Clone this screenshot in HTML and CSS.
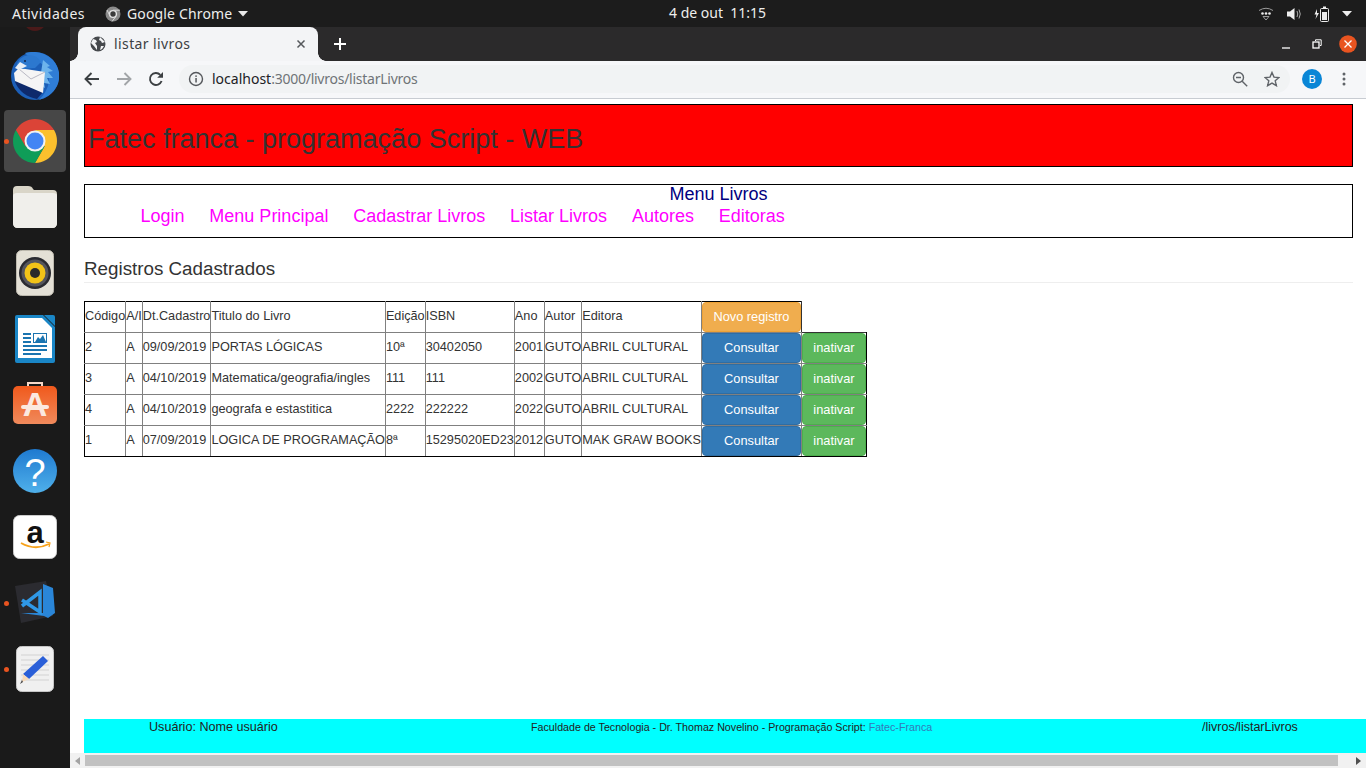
FILE: index.html
```html
<!DOCTYPE html>
<html lang="pt-BR">
<head>
<meta charset="utf-8">
<title>listar livros</title>
<link rel="stylesheet" href="styles.css">
</head>
<body>
<div class="topbar">
  <div class="top-left">
    <span class="top-activities">Atividades</span>
    <span class="top-app">
      <svg class="top-chrome" width="16" height="16" viewBox="0 0 16 16"><circle cx="8" cy="8" r="7.500" fill="#8a8a8a"/><circle cx="8" cy="8" r="3.400" fill="#3a3a3a" stroke="#e6e6e6" stroke-width="1.400"/><path d="M8 4.200H15M5 10l-3-6M10.500 11L7 15.500" stroke="#d8d8d8" stroke-width="1" fill="none"/></svg>
      Google Chrome
      <svg width="10" height="6" viewBox="0 0 10 6"><path d="M0 0h10L5 5.500z" fill="#e8e8e8"/></svg>
    </span>
  </div>
  <span class="top-clock">4 de out&nbsp;&nbsp;11:15</span>
  <div class="top-right">
    <svg width="16" height="14" viewBox="0 0 16 14"><path d="M1 3.500Q8-1 15 3.500" stroke="#9a9a9a" fill="none"/><path d="M5 9.500h6L8 13z" stroke="#9a9a9a" fill="none"/><circle cx="4.500" cy="6.500" r="1.300" fill="#eee"/><circle cx="8" cy="6.500" r="1.300" fill="#eee"/><circle cx="11.500" cy="6.500" r="1.300" fill="#eee"/></svg>
    <svg width="16" height="14" viewBox="0 0 16 14"><path d="M1 4.500h3L8.500 1v12L4 9.500H1z" fill="#eee"/><path d="M11 4q1.500 3 0 6M13 2.500q2.500 4.500 0 9" stroke="#aaa" fill="none"/></svg>
    <svg width="16" height="16" viewBox="0 0 16 16"><path d="M3 3L0.500 8.500H2.500L1.500 13L5 7H3z" fill="#eee"/><rect x="6.500" y="2.500" width="8" height="13" rx="1" fill="none" stroke="#eee"/><rect x="9" y="0.500" width="3" height="2" fill="#eee"/><rect x="8" y="6" width="5" height="8" fill="#eee"/></svg>
    <svg width="10" height="6" viewBox="0 0 10 6"><path d="M0 0h10L5 5.500z" fill="#eee"/></svg>
  </div>
</div>
<div class="desktop">
  <aside class="dock">
    <div class="dock-stub"></div>
    <div class="dock-item dock-bird">
      <svg width="48" height="48" viewBox="0 0 48 48"><circle cx="24" cy="24" r="24" fill="#1c5fb8"/><path d="M14 1Q30-3 42 8Q52 20 46 34Q41 44 28 48Q36 40 38 30Q38 14 26 9Q18 6 14 1z" fill="#2f7dd6"/><path d="M32 8l7 6-3 1 6 4-5 1 5 6-6 0 3 6-6-1 1 5-6-3" fill="#6db4ec"/><path d="M4 30Q10 44 26 47L32 40L6 26z" fill="#0e2a6c"/><path d="M3 21L8 16L34 20L32 41L4 29z" fill="#f5f5f5"/><path d="M8 17L20 27L34 20" stroke="#b9b9c4" fill="none"/><path d="M5 16Q7 4 18 3Q26 3 30 10L24 16L8 17z" fill="#2c78cf"/><path d="M4 16L9 10L16 14L8 18z" fill="#e8eef6"/><circle cx="14" cy="9" r="1" fill="#10244a"/></svg>
    </div>
    <div class="dock-item dock-active">
      <span class="dock-dot"></span>
      <svg width="44" height="44" viewBox="0 0 44 44"><path d="M41.050 11A22 22 0 0 1 22 44L31.500 27.500L22 11z" fill="#fbc02d"/><path d="M2.950 11A22 22 0 0 0 22 44L31.500 27.500L22 22z" fill="#0f9d58"/><path d="M22 11H41.050A22 22 0 0 0 2.950 11L12.500 27.500L22 22z" fill="#db4437"/><circle cx="22" cy="22" r="10.500" fill="#f2f2f2"/><circle cx="22" cy="22" r="8.500" fill="#4285f4"/></svg>
    </div>
    <div class="dock-item">
      <svg width="46" height="44" viewBox="0 0 46 44"><path d="M1 5Q1 1 5 1H16Q20 1 21 4L22 5H41Q45 5 45 9V38Q45 43 40 43H6Q1 43 1 38z" fill="#d9d5c8"/><path d="M1 11Q1 8 5 8H41Q45 8 45 11V38Q45 43 40 43H6Q1 43 1 38z" fill="#f0efeb"/></svg>
    </div>
    <div class="dock-item">
      <svg width="38" height="46" viewBox="0 0 38 46"><rect x="0.500" y="0.500" width="37" height="45" rx="5" fill="#e4e0d6" stroke="#bdb9ae"/><circle cx="19" cy="23" r="16" fill="#2a2a30"/><circle cx="19" cy="23" r="13.500" fill="#55555c"/><circle cx="19" cy="23" r="10.500" fill="#f2c318"/><circle cx="19" cy="23" r="5" fill="#2a2a2a"/></svg>
    </div>
    <div class="dock-item">
      <svg width="40" height="48" viewBox="0 0 40 48"><path d="M0 2Q0 0 2 0H28L40 12V46Q40 48 38 48H2Q0 48 0 46z" fill="#1a86c6"/><path d="M3 3H27L37 13V43H3z" fill="#fff"/><path d="M29 0H38Q40 0 40 2V11z" fill="#1a86c6"/><rect x="8" y="18" width="8" height="2" fill="#1a74b0"/><rect x="8" y="22" width="8" height="2" fill="#1a74b0"/><rect x="8" y="26" width="8" height="2" fill="#1a74b0"/><rect x="18.500" y="18.500" width="13" height="9" fill="#fff" stroke="#1a74b0"/><path d="M20 27l3-5 2 2 3-4 3 7z" fill="#1a74b0"/><rect x="8" y="30" width="24" height="2" fill="#1a74b0"/><rect x="8" y="34" width="24" height="2" fill="#1a74b0"/><rect x="8" y="38" width="18" height="2" fill="#1a74b0"/></svg>
    </div>
    <div class="dock-item">
      <svg width="44" height="46" viewBox="0 0 44 46"><defs><linearGradient id="store" x1="0" y1="0" x2="0" y2="1"><stop offset="0" stop-color="#f0591c"/><stop offset="1" stop-color="#f08a5c"/></linearGradient></defs><path d="M15 5V1H29V5" stroke="#f6d8c8" stroke-width="2" fill="none"/><rect x="0" y="4" width="44" height="38" rx="5" fill="url(#store)"/><text class="store-a" x="22" y="34" text-anchor="middle">A</text><rect x="8" y="23" width="28" height="4" rx="2" fill="#fbe9e0"/></svg>
    </div>
    <div class="dock-item">
      <svg width="44" height="44" viewBox="0 0 44 44"><defs><linearGradient id="help" x1="0" y1="0" x2="0" y2="1"><stop offset="0" stop-color="#1f7ad0"/><stop offset="1" stop-color="#4fb0ea"/></linearGradient></defs><circle cx="22" cy="22" r="22" fill="url(#help)"/><text class="help-q" x="22" y="37" text-anchor="middle">?</text></svg>
    </div>
    <div class="dock-item">
      <svg width="44" height="44" viewBox="0 0 44 44"><rect x="0.500" y="0.500" width="43" height="43" rx="6" fill="#fff" stroke="#ccc"/><text class="amazon-a" x="22" y="28" text-anchor="middle">a</text><path d="M8 28Q22 36 36 29" stroke="#f7a21b" stroke-width="1.800" fill="none"/><path d="M33 27l4 1-1 4" stroke="#f7a21b" stroke-width="1.200" fill="none"/></svg>
    </div>
    <div class="dock-item">
      <span class="dock-dot"></span>
      <svg width="42" height="44" viewBox="0 0 42 44"><path d="M1 5L32 0L39 35L7 42z" fill="#2b2b30"/><path d="M29 3L39 7L41 32L34 37L30 35L7 32L29 32z" fill="#2a86d8"/><path d="M8 25L26 11V31L8 19" fill="none" stroke="#2f98e6" stroke-width="3.500"/></svg>
    </div>
    <div class="dock-item">
      <span class="dock-dot"></span>
      <svg width="38" height="46" viewBox="0 0 38 46"><rect x="0.500" y="0.500" width="37" height="45" rx="5" fill="#f0f0f0" stroke="#c6c6c6"/><path d="M5 9H33M5 14H33M5 19H33M5 24H33M5 29H33M5 34H33" stroke="#d2d2d2"/><path d="M27 10l5 5L13 33l-6-5z" fill="#2a5fd8"/><path d="M7 28l6 5-7 3z" fill="#f7d9b8"/><path d="M6 34l1 2-3 2z" fill="#444"/></svg>
    </div>
    <div class="dock-item dock-grid">
      <i></i><i></i><i></i><i></i><i></i><i></i><i></i><i></i><i></i>
    </div>
  </aside>
  <div class="window">
    <div class="tabstrip">
      <div class="tab">
        <svg width="16" height="16" viewBox="0 0 16 16"><circle cx="8" cy="8" r="7.500" fill="#45484c"/><path d="M3 3l3 1 1 2-2 1 2 3v4L4 10 1 7zM10 1l-1 3 2 1 1 2 3-1zM11 10h3l-2 3-2 1z" fill="#f3f4f6"/></svg>
        <span class="tab-title">listar livros</span>
        <svg class="tab-close" width="10" height="10" viewBox="0 0 10 10"><path d="M1.500 1.500l7 7M8.500 1.500l-7 7" stroke="#55585c" stroke-width="1.500"/></svg>
      </div>
      <svg class="tab-new" width="12" height="12" viewBox="0 0 12 12"><path d="M6 0v12M0 6h12" stroke="#fff" stroke-width="2"/></svg>
      <div class="win-controls">
        <svg width="10" height="10" viewBox="0 0 10 10"><path d="M1 9h8" stroke="#fff" stroke-width="1.300"/></svg>
        <svg width="10" height="10" viewBox="0 0 10 10"><path d="M3.500 2V0.800H9.200V6.500H8" stroke="#fff" fill="none"/><rect x="1" y="3" width="6" height="6" fill="none" stroke="#fff" stroke-width="1.300"/></svg>
        <svg width="18" height="18" viewBox="0 0 18 18"><circle cx="9" cy="9" r="8.800" fill="#e95420"/><path d="M5.500 5.500l7 7M12.500 5.500l-7 7" stroke="#fff" stroke-width="1.300"/></svg>
      </div>
    </div>
    <div class="toolbar">
      <span class="tool"><svg width="16" height="14" viewBox="0 0 16 14"><path d="M15 7H2M7.500 1L1.500 7l6 6" stroke="#3c4043" stroke-width="1.900" fill="none"/></svg></span>
      <span class="tool"><svg width="16" height="14" viewBox="0 0 16 14"><path d="M1 7H14M8.500 1l6 6-6 6" stroke="#a2a5a8" stroke-width="1.900" fill="none"/></svg></span>
      <span class="tool"><svg width="16" height="16" viewBox="0 0 16 16"><path d="M13.600 10A6 6 0 1 1 12.300 3.800" stroke="#3c4043" stroke-width="1.900" fill="none"/><path d="M15 1V6.800H9.200z" fill="#3c4043"/></svg></span>
      <div class="omnibox">
        <svg width="16" height="16" viewBox="0 0 16 16"><circle cx="8" cy="8" r="6.500" stroke="#55585c" stroke-width="1.400" fill="none"/><rect x="7.300" y="7" width="1.500" height="4.500" fill="#55585c"/><rect x="7.300" y="4.400" width="1.500" height="1.500" fill="#55585c"/></svg>
        <span class="url"><span class="url-host">localhost</span>:3000/livros/listarLivros</span>
        <span class="tool omni-first"><svg width="16" height="16" viewBox="0 0 16 16"><circle cx="6.500" cy="6.500" r="5" stroke="#5f6368" stroke-width="1.400" fill="none"/><path d="M4 6.500h5M10.200 10.200l5 5" stroke="#5f6368" stroke-width="1.400"/></svg></span>
        <span class="tool"><svg width="16" height="16" viewBox="0 0 16 16"><path d="M8 1.500l2 4.600 5 .4-3.800 3.300 1.200 4.900L8 12.100l-4.400 2.600 1.200-4.900L1 6.500l5-.4z" stroke="#5f6368" stroke-width="1.400" fill="none"/></svg></span>
      </div>
      <span class="tool tool-avatar"><span class="avatar">B</span></span>
      <span class="tool"><svg width="4" height="14" viewBox="0 0 4 14"><circle cx="2" cy="2" r="1.500" fill="#5f6368"/><circle cx="2" cy="7" r="1.500" fill="#5f6368"/><circle cx="2" cy="12" r="1.500" fill="#5f6368"/></svg></span>
    </div>
    <div class="viewport">
      <main class="content">
        <header class="banner">Fatec franca - programação Script - WEB</header>
        <nav class="menu">
          <div class="menu-title">Menu Livros</div>
          <div class="menu-links">
            <a href="#">Login</a>
            <a href="#">Menu Principal</a>
            <a href="#">Cadastrar Livros</a>
            <a href="#">Listar Livros</a>
            <a href="#">Autores</a>
            <a href="#">Editoras</a>
          </div>
        </nav>
        <h1 class="section-title">Registros Cadastrados</h1>
        <table class="grid">
          <thead>
            <tr>
              <td>Código</td><td>A/I</td><td>Dt.Cadastro</td><td>Titulo do Livro</td><td>Edição</td><td>ISBN</td><td class="col-ano">Ano</td><td>Autor</td><td>Editora</td>
              <td class="cell-btn cell-head-end"><button class="btn btn-orange">Novo registro</button></td>
            </tr>
          </thead>
          <tbody>
            <tr>
              <td>2</td><td>A</td><td>09/09/2019</td><td>PORTAS LÓGICAS</td><td>10ª</td><td>30402050</td><td>2001</td><td>GUTO</td><td>ABRIL CULTURAL</td>
              <td class="cell-btn"><button class="btn btn-blue">Consultar</button></td>
              <td class="cell-btn"><button class="btn btn-green">inativar</button></td>
            </tr>
            <tr>
              <td>3</td><td>A</td><td>04/10/2019</td><td>Matematica/geografia/ingles</td><td>111</td><td>111</td><td>2002</td><td>GUTO</td><td>ABRIL CULTURAL</td>
              <td class="cell-btn"><button class="btn btn-blue">Consultar</button></td>
              <td class="cell-btn"><button class="btn btn-green">inativar</button></td>
            </tr>
            <tr>
              <td>4</td><td>A</td><td>04/10/2019</td><td>geografa e estastitica</td><td>2222</td><td>222222</td><td>2022</td><td>GUTO</td><td>ABRIL CULTURAL</td>
              <td class="cell-btn"><button class="btn btn-blue">Consultar</button></td>
              <td class="cell-btn"><button class="btn btn-green">inativar</button></td>
            </tr>
            <tr>
              <td>1</td><td>A</td><td>07/09/2019</td><td>LOGICA DE PROGRAMAÇÃO</td><td>8ª</td><td>15295020ED23</td><td>2012</td><td>GUTO</td><td>MAK GRAW BOOKS</td>
              <td class="cell-btn"><button class="btn btn-blue">Consultar</button></td>
              <td class="cell-btn"><button class="btn btn-green">inativar</button></td>
            </tr>
          </tbody>
        </table>
      </main>
      <footer class="footer">
        <span class="foot-user">Usuário: Nome usuário</span>
        <span class="foot-credit">Faculdade de Tecnologia - Dr. Thomaz Novelino - Programação Script: <a href="#">Fatec-Franca</a></span>
        <span class="foot-path">/livros/listarLivros</span>
      </footer>
      <div class="hscroll">
        <svg class="hscroll-arrow" width="5" height="8" viewBox="0 0 5 8"><path d="M5 0v8L0 4z" fill="#a3a3a3"/></svg>
        <div class="hscroll-thumb"></div>
        <svg class="hscroll-arrow" width="5" height="8" viewBox="0 0 5 8"><path d="M0 0v8l5-4z" fill="#505050"/></svg>
      </div>
    </div>
  </div>
</div>
</body>
</html>
```
FILE: styles.css
```css
* { box-sizing: border-box; }
html, body { margin: 0; height: 100%; overflow: hidden; }
body {
  width: 1366px;
  height: 768px;
  display: flex;
  flex-direction: column;
  font-family: "Liberation Sans", Arial, sans-serif;
  color: #333;
  background: #1c1c1c;
}

/* GNOME top bar */
.topbar {
  flex: 0 0 27px;
  position: relative;
  display: flex;
  align-items: center;
  justify-content: space-between;
  background: #1c1c1c;
  color: #eeeeec;
  font-family: "Noto Sans", sans-serif;
  font-size: 14px;
  padding: 0 14px 0 12px;
}
.top-left { display: flex; align-items: center; gap: 20px; }
.top-activities { letter-spacing: 0.5px; }
.top-app { display: flex; align-items: center; gap: 6px; letter-spacing: 0.15px; }
.top-clock {
  position: absolute;
  left: 669px;
  top: 4px;
  font-size: 14px;
  line-height: 18px;
  color: #eeeeec;
}
.top-right { display: flex; align-items: center; gap: 12px; }

/* Dock */
.desktop { flex: 1; display: flex; min-height: 0; }
.dock {
  flex: 0 0 70px;
  display: flex;
  flex-direction: column;
  background: #1a1a1a;
  overflow: hidden;
  padding-top: 15px;
  position: relative;
}
.dock-stub {
  position: absolute;
  left: 22px;
  top: -26px;
  width: 26px;
  height: 30px;
  border-radius: 50%;
  background: #4a1a1a;
}
.dock-item {
  flex: 0 0 66px;
  display: flex;
  align-items: center;
  justify-content: center;
  position: relative;
}
.dock-bird svg { margin-top: 2px; }
.dock-active::before {
  content: "";
  position: absolute;
  left: 4px;
  top: 2px;
  width: 62px;
  height: 62px;
  border-radius: 4px;
  background: #474747;
}
.dock-active svg { position: relative; }
.dock-dot {
  position: absolute;
  left: 4px;
  top: 31px;
  width: 5px;
  height: 5px;
  border-radius: 50%;
  background: #e95420;
  z-index: 1;
}
.dock-grid {
  display: grid;
  grid-template-columns: repeat(3, 6px);
  grid-template-rows: repeat(3, 6px);
  gap: 6px;
  justify-content: center;
  align-content: center;
}
.dock-grid i { background: #eee; border-radius: 1px; }
.store-a { font: bold 34px "Liberation Sans", sans-serif; fill: #fbe9e0; }
.help-q { font: 38px "Liberation Sans", sans-serif; fill: #fff; }
.amazon-a { font: bold 31px "Liberation Sans", sans-serif; fill: #111; }

/* Chrome window */
.window { flex: 1; display: flex; flex-direction: column; min-width: 0; background: #fff; }
.tabstrip {
  flex: 0 0 34px;
  display: flex;
  align-items: center;
  background: #2b2a2b;
  padding-left: 8px;
}
.tab {
  position: relative;
  width: 240px;
  height: 34px;
  display: flex;
  align-items: center;
  background: #f3f4f6;
  border-radius: 8px 8px 0 0;
  padding: 0 12px;
  gap: 8px;
}
.tab::before,
.tab::after {
  content: "";
  position: absolute;
  bottom: 0;
  width: 8px;
  height: 8px;
}
.tab::before {
  left: -8px;
  background: radial-gradient(circle at 0 0, #2b2a2b 7.5px, #f3f4f6 8px);
}
.tab::after {
  right: -8px;
  background: radial-gradient(circle at 100% 0, #2b2a2b 7.5px, #f3f4f6 8px);
}
.tab-title {
  flex: 1;
  font-family: "Noto Sans", sans-serif;
  font-size: 14px;
  letter-spacing: 0.4px;
  color: #3c4043;
  margin-top: -2px;
}
.tab-new { margin-left: 16px; }
.win-controls {
  margin-left: auto;
  display: flex;
  align-items: center;
  gap: 17px;
  padding-right: 9px;
}
.win-controls svg:first-child { margin-right: 4px; }
.toolbar {
  flex: 0 0 38px;
  display: flex;
  align-items: center;
  background: #f6f7f9;
  border-bottom: 1px solid #c8ccd2;
  padding: 0 5px 1px 6px;
}
.tool {
  flex: 0 0 32px;
  height: 28px;
  display: flex;
  align-items: center;
  justify-content: center;
}
.omnibox {
  width: 1111px;
  height: 28px;
  margin: 0 6px 0 7px;
  display: flex;
  align-items: center;
  gap: 8px;
  border-radius: 14px;
  background: #f1f3f4;
  padding: 0 2px 0 9px;
}
.omnibox .tool { margin-left: -8px; }
.omnibox .omni-first { margin-left: 0; }
.url {
  flex: 1;
  font-family: "Noto Sans", sans-serif;
  font-size: 14px;
  letter-spacing: -0.25px;
  color: #6f7377;
  margin-top: -1px;
}
.url-host { color: #202124; letter-spacing: 0; }
.avatar {
  width: 20px;
  height: 20px;
  border-radius: 50%;
  background: #0a86d6;
  color: #fff;
  font-family: "Noto Sans", sans-serif;
  font-size: 11px;
  line-height: 20px;
  text-align: center;
}

/* Page */
.viewport { flex: 1; display: flex; flex-direction: column; min-height: 0; background: #fff; }
.content { flex: 1; padding: 5px 13px 0 14px; min-height: 0; }
.banner {
  height: 63px;
  border: 1px solid #000;
  background: #f00;
  color: #333;
  font-size: 27px;
  line-height: 69px;
  padding-left: 3px;
}
.menu {
  height: 54px;
  margin-top: 17px;
  border: 1px solid #000;
}
.menu-title { font-size: 18px; line-height: 18px; color: #000080; text-align: center; }
.menu-links { display: flex; gap: 24.800px; padding-left: 55.500px; margin-top: 1px; }
.menu-links a { font-size: 18px; line-height: 24px; color: #f0f; text-decoration: none; }
.section-title {
  margin: 20px 0 18px;
  height: 25px;
  font-size: 18.800px;
  font-weight: 400;
  line-height: 21px;
  color: #333;
  border-bottom: 1px solid #eee;
}
.grid { border-collapse: collapse; font-size: 12.700px; line-height: 18px; }
.grid td {
  height: 31px;
  padding: 0 0 2px;
  border: 1px solid #808080;
  white-space: nowrap;
  background: #fff;
}
.grid .col-ano { width: 30px; }
.grid thead td { border-top-color: #000; }
.grid tbody tr:last-child td { border-bottom-color: #000; }
.grid td:first-child { border-left-color: #000; }
.grid tbody td:last-child { border-right-color: #000; border-top-color: #333; }
.grid .cell-head-end { border-right-color: #333; }
.grid .cell-btn { vertical-align: top; padding: 0; }
.btn {
  display: block;
  height: 30px;
  border: 1px solid transparent;
  border-radius: 4px;
  padding: 0;
  color: #fff;
  font: 12.800px/18px "Liberation Sans", Arial, sans-serif;
}
.btn-orange { width: 99px; background: #f0ad4e; border-color: #eea236; }
.btn-blue { width: 99px; background: #337ab7; border-color: #2e6da4; }
.btn-green { width: 64px; background: #5cb85c; border-color: #4cae4c; }

/* Footer */
.footer {
  flex: 0 0 34px;
  margin-left: 14px;
  display: flex;
  background: #0ff;
  color: #222;
  line-height: 16px;
}
.foot-user { margin-left: 65px; width: 382px; font-size: 12.600px; }
.foot-credit { width: 671px; font-size: 10.700px; }
.foot-credit a { color: #337ab7; text-decoration: none; }
.foot-path { font-size: 12.500px; }
.hscroll {
  flex: 0 0 15px;
  display: flex;
  align-items: center;
  background: #f1f1f1;
  padding: 0 5px;
  gap: 5px;
}
.hscroll-thumb { flex: 1; height: 11px; background: #c1c1c1; margin-right: 13px; }
.hscroll-arrow { flex: 0 0 5px; }
```
